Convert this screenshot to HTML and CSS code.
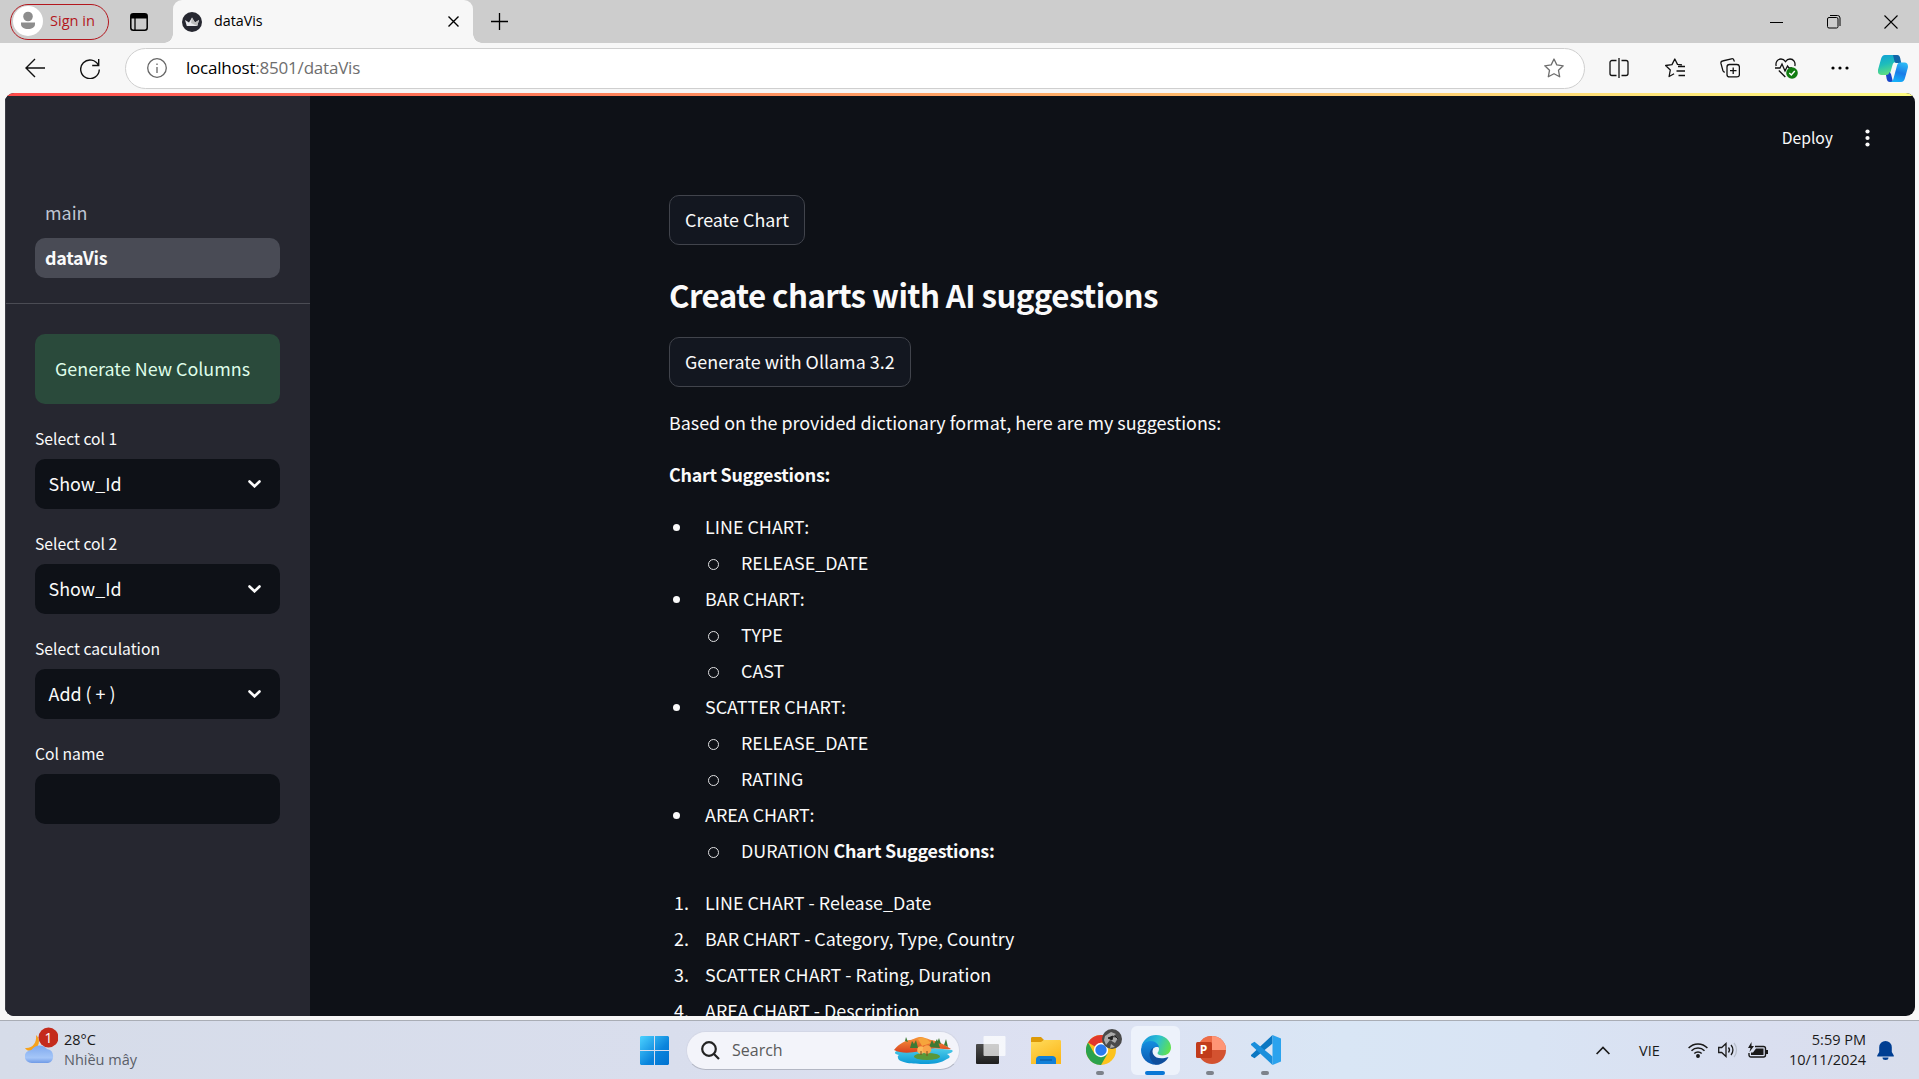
FILE: index.html
```html
<!DOCTYPE html>
<html lang="en">
<head>
<meta charset="utf-8">
<title>dataVis</title>
<link rel="stylesheet" href="styles.css">
</head>
<body>
<div class="screen">
  <header class="tabstrip">
    <div class="signin">
      <svg class="avatar" width="30" height="30" viewBox="0 0 30 30"><circle cx="15" cy="15" r="15" fill="#fff"/><circle cx="15" cy="10.5" r="4.8" fill="#8d8d8d"/><path d="M8 16.500h14v1.500c0 3.500-3 5-7 5s-7-1.500-7-5z" fill="#8d8d8d"/></svg>
      <span>Sign in</span>
    </div>
    <svg class="workspaces" width="18" height="18" viewBox="0 0 18 18"><rect x="0.800" y="0.800" width="16.400" height="16.400" rx="2.500" fill="none" stroke="#000" stroke-width="1.500"/><path d="M1 1h16v4.500H1z"/><path d="M5 5v12" stroke="#000" stroke-width="1.300"/></svg>
    <div class="tab">
      <svg width="20" height="20" viewBox="0 0 20 20"><circle cx="10" cy="10" r="10" fill="#262730"/><path d="M3 8l4 2.500L10 5.500l3 5L17 8l-1.800 6H4.800z" fill="#e8e8ec"/><path d="M10 5.500l3 5L17 8l-1.800 6-6.200-3z" fill="#bbb"/></svg>
      <span class="tab-title">dataVis</span>
      <svg class="tab-close" width="11" height="11" viewBox="0 0 11 11"><path d="M.5.5l10 10M10.500.5l-10 10" stroke="#000" stroke-width="1.400"/></svg>
    </div>
    <svg class="newtab" width="17" height="17" viewBox="0 0 17 17"><path d="M8.500 0v17M0 8.500h17" stroke="#000" stroke-width="1.300"/></svg>
    <div class="window-controls">
      <svg width="14" height="14" viewBox="0 0 14 14"><path d="M0 7.500h13" stroke="#000"/></svg>
      <svg width="14" height="14" viewBox="0 0 14 14" fill="none" stroke="#000"><rect x=".5" y="2.500" width="10.500" height="10.500" rx="1.500"/><path d="M3 .5h7.500a2.500 2.500 0 0 1 2.500 2.500v8"/></svg>
      <svg width="14" height="14" viewBox="0 0 14 14"><path d="M.5.5l13 13M13.500.5l-13 13" stroke="#000" stroke-width="1.100"/></svg>
    </div>
  </header>

  <div class="toolbar">
    <svg class="back" width="20" height="20" viewBox="0 0 20 20" fill="none" stroke="#111" stroke-width="1.400"><path d="M20 10H1M10 1l-9 9 9 9"/></svg>
    <svg class="reload" width="20" height="21" viewBox="0 0 20 21" fill="none" stroke="#111" stroke-width="1.400"><path d="M18.500 7.500A9.300 9.300 0 1 0 19.300 11.500M18.700 1v6.500h-6.500"/></svg>
    <div class="address">
      <svg class="info" width="20" height="20" viewBox="0 0 20 20" fill="none" stroke="#666" stroke-width="1.300"><circle cx="10" cy="10" r="9.300"/><path d="M10 9v6M10 5.500v1.600"/></svg>
      <span class="url"><b>localhost</b>:8501/dataVis</span>
      <svg class="star" width="20" height="20" viewBox="0 0 20 20" fill="none" stroke="#6e6e6e" stroke-width="1.300" stroke-linejoin="round"><path d="M10 1l2.800 5.900 6.400.9-4.700 4.500 1.200 6.500L10 15.700l-5.700 3.100 1.200-6.500L.8 7.800l6.400-.9z"/></svg>
    </div>
    <div class="tools">
      <svg width="20" height="20" viewBox="0 0 20 20" fill="none" stroke="#111" stroke-width="1.300"><path d="M7.500 2.500H3A2 2 0 0 0 1 4.500v11a2 2 0 0 0 2 2h4.500M12.500 2.500H17a2 2 0 0 1 2 2v11a2 2 0 0 1-2 2h-4.500M10 0v20"/></svg>
      <svg width="20" height="20" viewBox="0 0 20 20" fill="none" stroke="#111" stroke-width="1.300" stroke-linejoin="round"><path d="M17 6.800l-4.500-.4L9.800 1 7 6.600l-6.400.9 4.700 4.500-1.200 6.500 5-2.700M13 8.500h7M11.500 13h8.500M13.500 17.500H20"/></svg>
      <svg width="20" height="20" viewBox="0 0 20 20" fill="none" stroke="#111" stroke-width="1.300"><rect x="7" y="6.500" width="12.400" height="12.400" rx="2.500"/><path d="M13.200 9.500v6.500M10 12.700h6.500M14.500 3.500l-.6-1.300A2 2 0 0 0 11.500.8L2.500 3A2 2 0 0 0 .9 5.200l2 7.500a2 2 0 0 0 2 1.500"/></svg>
      <svg class="essentials" width="23" height="21" viewBox="0 0 23 21" fill="none" stroke="#111" stroke-width="1.300"><path d="M1.200 8C.2 4.500 2.500 1 6 1c2 0 3.500 1.200 4.500 2.700C11.500 2.200 13 1 15 1c3.500 0 5.800 3.500 4.800 7M0 10h5l2-4 3 7 2.500-5 1.500 2h3M3.800 12.500l6.500 6.500"/><circle cx="17" cy="15" r="5.800" fill="#107c10" stroke="none"/><path d="M14.300 15l2 2 3.500-4" stroke="#fff" stroke-width="1.400"/></svg>
      <svg width="18" height="4" viewBox="0 0 18 4"><circle cx="2" cy="2" r="1.600"/><circle cx="9" cy="2" r="1.600"/><circle cx="16" cy="2" r="1.600"/></svg>
      <svg width="30" height="27" viewBox="0 0 30 27"><defs><linearGradient id="ca" x1="0" y1="0" x2=".3" y2="1"><stop offset="0" stop-color="#0f9fd8"/><stop offset=".5" stop-color="#1ebdbb"/><stop offset="1" stop-color="#5fdf80"/></linearGradient><linearGradient id="cb" x1=".6" y1="0" x2=".3" y2="1"><stop offset="0" stop-color="#2bb8f5"/><stop offset=".5" stop-color="#1a7ce8"/><stop offset="1" stop-color="#15b4fa"/></linearGradient></defs><path d="M7 0h11c2 0 3 1 3.500 3l1 4H18c-2 0-3 1-3.500 3l-2 7c-.5 2-1.500 3-3.500 3H3.500C1 20-.5 18-.1 15L3 4C3.800 1.500 5 0 7 0z" fill="url(#ca)"/><path d="M15 0h4c2 0 2.700 1 3.200 3l1 5h-5c-1.500 0-1.500-1-2-3z" fill="#1265a8"/><path d="M8 20c2 0 3-1 3.500-3l1.500 2 2 8h-3c-2 0-2.800-1-3.300-3z" fill="#1847c8"/><path d="M22.500 7.500h4c2.500 0 3.800 2 3.400 5L27 23c-.7 2.500-2 4-4 4H12c2 0 3-1.500 3.500-3.500l3.500-13c.5-2 1.500-3 3.500-3z" fill="url(#cb)"/></svg>
    </div>
  </div>

  <div class="viewport">
    <div class="decoration"></div>
    <div class="app">
      <aside class="sidebar">
        <nav class="pages">
          <a class="page">main</a>
          <a class="page active">dataVis</a>
        </nav>
        <div class="controls">
          <div class="success">Generate New Columns</div>
          <label>Select col 1</label>
          <div class="select"><span>Show_Id</span><svg width="13" height="8" viewBox="0 0 13 8"><path d="M1.500 1.500l5 4.800 5-4.800" fill="none" stroke="#fafafa" stroke-width="2.600" stroke-linecap="round"/></svg></div>
          <label>Select col 2</label>
          <div class="select"><span>Show_Id</span><svg width="13" height="8" viewBox="0 0 13 8"><path d="M1.500 1.500l5 4.800 5-4.800" fill="none" stroke="#fafafa" stroke-width="2.600" stroke-linecap="round"/></svg></div>
          <label>Select caculation</label>
          <div class="select"><span>Add ( + )</span><svg width="13" height="8" viewBox="0 0 13 8"><path d="M1.500 1.500l5 4.800 5-4.800" fill="none" stroke="#fafafa" stroke-width="2.600" stroke-linecap="round"/></svg></div>
          <label>Col name</label>
          <div class="select"></div>
        </div>
      </aside>
      <main class="main">
        <div class="app-header"><span>Deploy</span><svg width="5" height="18" viewBox="0 0 5 18" fill="#fafafa"><circle cx="2.500" cy="2.500" r="2.100"/><circle cx="2.500" cy="9" r="2.100"/><circle cx="2.500" cy="15.500" r="2.100"/></svg></div>
        <div class="content">
          <button class="btn">Create Chart</button>
          <h2>Create charts with AI suggestions</h2>
          <button class="btn">Generate with Ollama 3.2</button>
          <p>Based on the provided dictionary format, here are my suggestions:</p>
          <p><strong>Chart Suggestions:</strong></p>
          <ul class="list">
            <li>LINE CHART:<ul><li>RELEASE_DATE</li></ul></li>
            <li>BAR CHART:<ul><li>TYPE</li><li>CAST</li></ul></li>
            <li>SCATTER CHART:<ul><li>RELEASE_DATE</li><li>RATING</li></ul></li>
            <li>AREA CHART:<ul><li>DURATION <strong>Chart Suggestions:</strong></li></ul></li>
          </ul>
          <ol class="list">
            <li>LINE CHART - Release_Date</li>
            <li>BAR CHART - Category, Type, Country</li>
            <li>SCATTER CHART - Rating, Duration</li>
            <li>AREA CHART - Description</li>
          </ol>
        </div>
      </main>
    </div>
  </div>

  <footer class="taskbar">
    <div class="weather">
      <svg width="33" height="37" viewBox="0 0 33 37"><defs><linearGradient id="cl" x1="0" y1="0" x2="0" y2="1"><stop offset="0" stop-color="#7fa9ee"/><stop offset=".7" stop-color="#a5c6f8"/><stop offset="1" stop-color="#6f9ae6"/></linearGradient></defs><path d="M11 8c5 4 4 13-5 16-3 0-5-1-6-3 7 1 12-5 11-13z" fill="#f6a21c"/><path d="M7 36a7 6.500 0 0 1-.5-13A9 8 0 0 1 22 22a7.200 7.200 0 0 1 1 14z" fill="url(#cl)"/><circle cx="23.500" cy="10.500" r="10" fill="#c42b1c"/><text x="23.500" y="15.500" text-anchor="middle" font-family="Open Sans, sans-serif" font-size="14" fill="#fff">1</text></svg>
      <div class="weather-text"><span>28°C</span><span class="muted">Nhiều mây</span></div>
    </div>
    <div class="apps">
      <svg class="start" width="29" height="29" viewBox="0 0 29 29"><defs><linearGradient id="wn" x1="0" y1="0" x2="1" y2="1"><stop offset="0" stop-color="#4cd2ff"/><stop offset=".6" stop-color="#0a84dc"/><stop offset="1" stop-color="#0072d0"/></linearGradient></defs><path d="M1 0h13v14H0V1zM15 0h13l1 1v13H15zM0 15h14v14H1l-1-1zM15 15h14v13l-1 1H15z" fill="url(#wn)"/></svg>
      <div class="search">
        <svg width="19" height="19" viewBox="0 0 19 19" fill="none" stroke="#222" stroke-width="2.200"><circle cx="8" cy="8" r="6.800"/><path d="M13 13l5 5"/></svg>
        <span>Search</span>
        <svg class="lake" width="59" height="29" viewBox="0 0 59 29"><defs><linearGradient id="lk" x1="0" y1="0" x2="0" y2="1"><stop offset="0" stop-color="#53d1ea"/><stop offset="1" stop-color="#0c9ad6"/></linearGradient><linearGradient id="hl" x1="0" y1="0" x2="0" y2="1"><stop offset="0" stop-color="#f7963a"/><stop offset="1" stop-color="#d9411f"/></linearGradient></defs><path d="M3 15l27-4 28 3c2 2-1 3-5 4 4 2 3 4 0 5-6 4-12 5-22 5-12 0-26-1-27-6 0-1-1-2 1-3-5-1-5-3-2-4z" fill="url(#lk)"/><path d="M0 14c3-4 8-8 15-10 4 0 5-2 10-3 6 0 8 2 12 3 8 1 15 6 20 9-8 1-15-2-22 0-10 3-26 6-35 1z" fill="url(#hl)"/><path d="M24 3c6-3 9 0 13 4l-9 3z" fill="#f6a53c"/><path d="M16 12l2-7 2 3 2-4 2 8zM35 11l3-7 2 4 3-5 3 9zM11 5l1-4 2 5zM50 9l2-6 2 8zM43 7l2-5 2 6z" fill="#3d7a35"/><ellipse cx="33" cy="20.500" rx="13" ry="3.500" fill="#5a9838"/><circle cx="27" cy="14" r="3.800" fill="#fbb95a"/><circle cx="33" cy="13.500" r="4.300" fill="#f9a44a"/><path d="M27 15v4M33 15v5" stroke="#854b1d"/></svg>
      </div>
      <div class="slot"><svg width="30" height="29" viewBox="0 0 30 29"><defs><linearGradient id="tv" x1="0" y1="0" x2="0" y2="1"><stop offset="0" stop-color="#4c4c4c"/><stop offset="1" stop-color="#1e1e1e"/></linearGradient></defs><rect y="8" width="23" height="20" rx="1" fill="url(#tv)"/><rect x="7.500" y="0" width="22" height="20" rx="1" fill="#fff" opacity=".72"/></svg></div>
      <div class="slot"><svg width="30" height="27" viewBox="0 0 30 27"><defs><linearGradient id="fo" x1="0" y1="0" x2=".6" y2="1"><stop offset="0" stop-color="#ffdc5c"/><stop offset="1" stop-color="#fcb81c"/></linearGradient></defs><path d="M0 1.500C0 .5.500 0 1.500 0H10l3 3-2 3H0z" fill="#dd9a08"/><path d="M0 5h10l3-2h15.500c1 0 1.500.5 1.500 1.500V27H0z" fill="url(#fo)"/><path d="M5 27v-4.500c0-2 1.500-3.500 3.500-3.500h13c2 0 3.500 1.500 3.500 3.500V27z" fill="#1280d8"/><path d="M9 23h12" stroke="#0a5ca8" stroke-width="1.300"/></svg></div>
      <div class="slot running chrome"><svg width="36" height="36" viewBox="0 0 36 36"><circle cx="15" cy="21" r="15" fill="#fcc31e"/><path d="M15 21L2 13.500A15 15 0 0 1 28 13.500H15z" fill="#e2382c"/><path d="M2 13.500A15 15 0 0 0 15 36l6.500-11.300L15 21 8.500 24.700z" fill="#2ba24c"/><circle cx="15" cy="21" r="7.200" fill="#fff"/><circle cx="15" cy="21" r="5.700" fill="#2a7bee"/><circle cx="26" cy="10" r="10" fill="#4a4a4a"/><path d="M19 7l6-4 5 2-4 3 6 1-3 5-5-3-4 5-2-5zM25 15l4 3-5 1z" fill="#aaa"/><path d="M22 9l5-2-1 4zM29 7l3 3" fill="#222" stroke="#222"/></svg></div>
      <div class="slot running active"><svg width="30" height="30" viewBox="0 0 30 30"><defs><linearGradient id="ea" x1="0" y1=".3" x2="1" y2=".6"><stop offset="0" stop-color="#1593dc"/><stop offset=".5" stop-color="#2bc0d2"/><stop offset="1" stop-color="#62e24c"/></linearGradient><linearGradient id="eb" x1="0" y1="0" x2="0" y2="1"><stop offset="0" stop-color="#148ee0"/><stop offset="1" stop-color="#0b58b0"/></linearGradient></defs><path d="M.3 12C2 4.500 8 0 15 0c9 0 15 6 15 12.500 0 5-4 8-8.500 8-3 0-5-1-5-2.500 0-.8 1.500-1.500 1.500-4C18 10 13 7 8 8 4 8.700 1 11 .3 12z" fill="url(#ea)"/><path d="M0 15c0-5 4.500-9 9.500-9 5 0 8.500 3.500 8.500 6.500-5-2-9 3-6.500 8.500 1.500 4 5 7 9 7.800C10 32.500 0 25 0 15z" fill="url(#eb)"/><path d="M12.500 12.500C9 19 15 26.500 27.500 22 25 27 19.500 30 14.500 29.500 8 26 6 16 12.500 12.500z" fill="#0f4e9c"/></svg></div>
      <div class="slot running"><svg width="30" height="28" viewBox="0 0 30 28"><circle cx="16" cy="14" r="14" fill="#d35230"/><path d="M16 0a14 14 0 0 1 14 14H16z" fill="#ff9575"/><path d="M16 0a14 14 0 0 0-13 8h13z" fill="#ed6c47"/><rect y="6" width="16" height="16" rx="1.500" fill="#c13b1b"/><text x="7.500" y="18.200" text-anchor="middle" font-family="Open Sans, sans-serif" font-weight="700" font-size="12" fill="#fff">P</text></svg></div>
      <div class="slot running"><svg width="30" height="30" viewBox="0 0 30 30"><path d="M21.500 8.500L3.500 23.300.6 21.500a1.200 1.200 0 0 1 0-2L21.500 0z" fill="#0b77c2"/><path d="M21.500 21.500L3.500 6.700.6 8.500a1.200 1.200 0 0 0 0 2L21.500 30z" fill="#1a8fdc"/><path d="M21.500 0L30 3.500v23L21.500 30z" fill="#2ba3ee"/></svg></div>
    </div>
    <div class="tray">
      <svg width="14" height="9" viewBox="0 0 14 9" fill="none" stroke="#1a1a1a" stroke-width="1.700"><path d="M.6 8L7 1.500 13.400 8"/></svg>
      <span class="lang">VIE</span>
      <svg class="wifi" width="20" height="16" viewBox="0 0 20 16" fill="none" stroke="#1a1a1a" stroke-width="1.500"><path d="M.6 6a13 13 0 0 1 18.800 0M3.500 8.800a9.200 9.200 0 0 1 13 0M6.300 11.500a5.200 5.200 0 0 1 7.400 0"/><circle cx="10" cy="14" r="1.200" fill="#1a1a1a"/></svg>
      <svg class="volume" width="20" height="16" viewBox="0 0 20 16" fill="none" stroke="#1a1a1a" stroke-width="1.300"><path d="M.7 5.500h3L8 1.500v13l-4.300-4h-3zM10.500 5.500a4 4 0 0 1 0 5M13 3a7.500 7.500 0 0 1 0 10"/><path d="M16 1a11 11 0 0 1 0 14" stroke="#b9bfcb"/></svg>
      <svg class="battery" width="20" height="17" viewBox="0 0 20 17"><path d="M7 4.500h8.500a2 2 0 0 1 2 2v6.500a2 2 0 0 1-2 2H3a2 2 0 0 1-2-2v-2" fill="none" stroke="#1a1a1a" stroke-width="1.400"/><path d="M8 6.500h7.500V13H3v-2.500h2zM18 8h2v4h-2zM3.500 0L0 6h2.500L1.500 10 6 4H3.500z" fill="#1a1a1a"/></svg>
      <div class="clock"><span>5:59 PM</span><span>10/11/2024</span></div>
      <svg class="bell" width="17" height="19" viewBox="0 0 17 19" fill="#003e92"><path d="M8.500 0a6.300 6.300 0 0 1 6.300 6.300V11l2 3.500v1H.2v-1L2.200 11V6.300A6.300 6.300 0 0 1 8.500 0zM5.500 16.500h6a3 2.500 0 0 1-6 0z"/></svg>
    </div>
  </footer>
</div>
</body>
</html>
```
FILE: styles.css
```css
* { box-sizing: border-box; }
body { margin: 0; font-family: "Open Sans", sans-serif; overflow: hidden; }
svg { display: block; flex: none; }
.screen { width: 1919px; height: 1079px; display: flex; flex-direction: column; background: #f7f7f7; overflow: hidden; }

/* Browser tab strip */
.tabstrip { height: 43px; flex: none; display: flex; align-items: center; background: #cdcdcd; padding-left: 10px; }
.signin { width: 99px; height: 36px; border: 1.500px solid #b3171e; border-radius: 18px; display: flex; align-items: center; padding: 0 0 1px 2px; color: #b3171e; font-size: 14.600px; white-space: nowrap; }
.signin span { margin: -2px 0 0 7px; }
.workspaces { margin-left: 21px; }
.tab { position: relative; width: 300px; height: 43px; margin-left: 25px; padding: 0 14px 0 9px; display: flex; align-items: center; background: #f7f7f7; border-radius: 9px 9px 0 0; font-size: 14.300px; }
.tab::before, .tab::after { content: ""; position: absolute; bottom: 0; width: 9px; height: 9px; }
.tab::before { left: -9px; background: radial-gradient(circle at 0 0, transparent 8.500px, #f7f7f7 9px); }
.tab::after { right: -9px; background: radial-gradient(circle at 100% 0, transparent 8.500px, #f7f7f7 9px); }
.tab-title { margin: -3px 0 0 12px; flex: 1; }
.newtab { margin-left: 18px; }
.window-controls { margin-left: auto; margin-right: 21px; display: flex; gap: 43px; }

/* Toolbar */
.toolbar { height: 50px; flex: none; display: flex; align-items: center; padding-left: 25px; }
.reload { margin-left: 35px; }
.address { width: 1460px; height: 41px; flex: none; margin-left: 25px; border: 1px solid #cfcfcf; border-radius: 21px; background: #fff; display: flex; align-items: center; padding: 0 20px 0 21px; }
.url { margin: -1px 0 0 19px; flex: 1; font-size: 17px; letter-spacing: -0.210px; color: #6e6e6e; }
.url b { font-weight: 400; color: #000; }
.tools { flex: none; display: grid; grid-template-columns: 56px repeat(4, 55px) 51px; margin-left: 6px; align-items: center; justify-items: center; }
.essentials { margin-left: 3px; }

/* Page viewport */
.viewport { width: 1910px; height: 923px; flex: none; margin-left: 5px; border-radius: 9px; overflow: hidden; display: flex; flex-direction: column; background: #0e1117; }
.decoration { height: 3px; flex: none; background: linear-gradient(90deg, #ff4b4b, #fffd80); }
.app { flex: 1; min-height: 0; display: flex; font-family: "Noto Sans CJK SC", sans-serif; color: #fafafa; font-size: 17.900px; }
.sidebar { width: 305px; flex: none; background: #262730; border-left: 1px solid #3b3c44; }
.pages { padding: 97px 30px 25px 29px; border-bottom: 1px solid #4b4c54; display: flex; flex-direction: column; gap: 5px; }
.page { height: 40px; line-height: 39px; padding-left: 10px; border-radius: 10px; color: #bfc5d3; }
.page.active { background: #494b55; color: #fafafa; font-weight: 700; letter-spacing: -0.300px; }
.controls { padding: 30px 30px 0 29px; display: flex; flex-direction: column; }
.success { height: 70px; border-radius: 10px; background: #2a4a3b; color: #dffde9; padding-left: 20px; line-height: 69px; }
.controls label { height: 55px; padding-top: 20px; line-height: 30px; font-size: 15.700px; }
.select { height: 50px; border-radius: 10px; background: #0e1117; padding: 0 19.500px 0 13.500px; display: flex; align-items: center; justify-content: space-between; }
.select span { padding-bottom: 1.500px; }

.main { flex: 1; display: flex; flex-direction: column; }
.app-header { height: 84px; flex: none; display: flex; justify-content: flex-end; align-items: center; gap: 32px; padding-right: 45px; font-size: 15.700px; }
.app-header span { padding-bottom: 2px; }
.content { flex: none; margin-left: 359px; padding-top: 15px; display: flex; flex-direction: column; align-items: flex-start; }
.btn { height: 50px; border: 1px solid #41444c; border-radius: 10px; background: #131720; color: #fafafa; font: inherit; padding: 0 15px 2px; white-space: nowrap; }
h2 { margin: 30px 0 22px; height: 40px; line-height: 40px; font-size: 31.300px; font-weight: 700; letter-spacing: -0.600px; }
strong { letter-spacing: -0.270px; }
p { margin: 0 0 20px; line-height: 32px; }
.btn + p { margin-top: 19px; }
.list { margin: -2px 0 18px; padding: 0 0 0 36px; line-height: 36px; list-style: none; counter-reset: n; }
.list ul { padding-left: 36px; margin: 0; list-style: none; }
.list li { position: relative; }
.list li::before { content: ""; position: absolute; }
ul.list > li::before { left: -32px; top: 16px; width: 7px; height: 7px; border-radius: 50%; background: #fafafa; }
.list ul > li::before { left: -33px; top: 15px; width: 9px; height: 9px; border-radius: 50%; border: 1px solid #e0e0e2; }
ol.list > li { counter-increment: n; }
ol.list > li::before { content: counter(n) "."; right: calc(100% + 16px); top: 0; }

/* Taskbar */
.taskbar { height: 59px; margin-top: 4px; flex: none; display: flex; border-top: 1px solid #a9adb5; background: linear-gradient(90deg, #d6dce9 0, #d9deed 35%, #dde1f2 55%, #d9e6f5 70%, #d9e4f4 80%, #dadff0 92%, #d9deec 100%); font-size: 14.500px; color: #1a1a1a; }
.weather { width: 640px; display: flex; padding: 6px 0 0 25px; gap: 6px; }
.weather-text { display: flex; flex-direction: column; padding-top: 3px; line-height: 20px; }
.muted { color: #5a5e68; }
.apps { display: flex; align-items: center; height: 58px; }
.search { width: 274px; height: 39px; margin: 0 5px 0 17px; border-radius: 20px; background: #f3f4fa; border: 1px solid #d3d7e6; border-bottom-color: #b3b7c4; display: flex; align-items: center; padding: 0 6px 0 14px; font-size: 16px; color: #5a5a5a; }
.search span { margin-left: 12px; }
.lake { margin-left: auto; }
.slot { position: relative; left: 1px; width: 49px; height: 49px; margin-right: 6px; display: flex; align-items: center; justify-content: center; border-radius: 6px; }
.slot.active { background: #edf2fb; }
.chrome svg { margin: 0 0 6px 6px; }
.running::after { content: ""; position: absolute; bottom: 0; left: 20px; width: 8px; height: 4px; border-radius: 2px; background: #7d828b; }
.running.active::after { left: 14px; width: 20px; background: #0a78d6; }
.tray { margin-left: auto; display: flex; align-items: center; padding-right: 25px; }
.lang { margin-left: 29px; width: 49px; }
.volume { margin-left: 10px; }
.battery { margin-left: 10px; }
.clock { width: 98px; display: flex; flex-direction: column; text-align: right; line-height: 20px; }
.bell { margin-left: 11px; }
```
